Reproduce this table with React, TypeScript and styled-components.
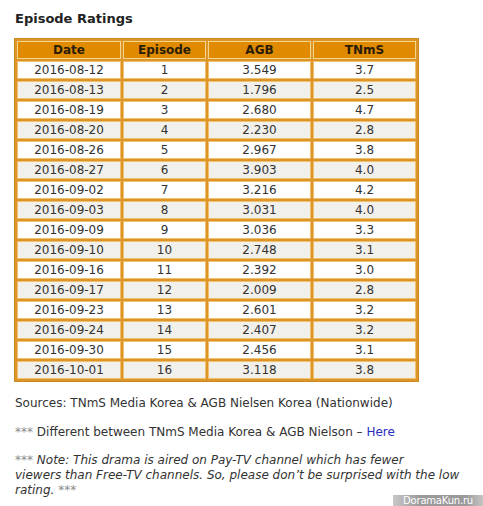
import React from "react";
import styled, { createGlobalStyle } from "styled-components";

const GlobalStyle = createGlobalStyle`
  html, body {
    margin: 0;
    padding: 0;
    background: #ffffff;
  }
  body {
    font-family: "DejaVu Sans", Verdana, sans-serif;
    color: #333333;
  }
`;

const Page = styled.div`
  position: relative;
  width: 483px;
  height: 506px;
  overflow: hidden;
  box-sizing: border-box;
  padding: 11px 12px 0 15px;
`;

const Title = styled.h3`
  margin: 0 0 11px;
  font-size: 13px;
  line-height: 16px;
  font-weight: bold;
  color: #222222;
`;

const Table = styled.table`
  margin-left: -1px;
  border: 1px solid #c98a24;
  border-collapse: separate;
  border-spacing: 2px;
  background: #dc9526;
  font-size: 12px;
  color: #333333;
`;

const HeadCell = styled.th<{ $w: number }>`
  width: ${(p) => p.$w}px;
  height: 16px;
  padding: 0;
  box-sizing: content-box;
  border: 1px solid #f4d58e;
  background: #e08a00;
  color: #2a1c05;
  font-weight: bold;
  line-height: 16px;
  text-align: center;
`;

const Cell = styled.td<{ $alt: boolean }>`
  height: 16px;
  padding: 0;
  border: 1px solid #eec070;
  background: ${(p) => (p.$alt ? "#f2f0ea" : "#ffffff")};
  line-height: 16px;
  text-align: center;
`;

const Para = styled.p<{ $top: number }>`
  margin: ${(p) => p.$top}px 0 0;
  width: 456px;
  font-size: 12px;
  line-height: 15px;
  color: #333333;
`;

const Note = styled(Para)`
  font-style: italic;
`;

const Stars = styled.span`
  color: #8a8a8a;
`;

const Link = styled.a`
  color: #2b2bc4;
  text-decoration: none;
`;

const Watermark = styled.div`
  position: absolute;
  right: 0;
  bottom: 0;
  width: 90px;
  height: 11px;
  background: linear-gradient(to right, #c8c8c8, #9a9a9a 30%, #9a9a9a 80%, #c4c4c4);
  color: #ffffff;
  font-family: "DejaVu Sans", sans-serif;
  font-size: 10px;
  line-height: 11px;
  text-align: center;
  letter-spacing: -0.2px;
`;

const rows: [string, number, string, string][] = [
  ["2016-08-12", 1, "3.549", "3.7"],
  ["2016-08-13", 2, "1.796", "2.5"],
  ["2016-08-19", 3, "2.680", "4.7"],
  ["2016-08-20", 4, "2.230", "2.8"],
  ["2016-08-26", 5, "2.967", "3.8"],
  ["2016-08-27", 6, "3.903", "4.0"],
  ["2016-09-02", 7, "3.216", "4.2"],
  ["2016-09-03", 8, "3.031", "4.0"],
  ["2016-09-09", 9, "3.036", "3.3"],
  ["2016-09-10", 10, "2.748", "3.1"],
  ["2016-09-16", 11, "2.392", "3.0"],
  ["2016-09-17", 12, "2.009", "2.8"],
  ["2016-09-23", 13, "2.601", "3.2"],
  ["2016-09-24", 14, "2.407", "3.2"],
  ["2016-09-30", 15, "2.456", "3.1"],
  ["2016-10-01", 16, "3.118", "3.8"],
];

function App() {
  return (
    <Page>
      <GlobalStyle />
      <Title>Episode Ratings</Title>
      <Table>
        <thead>
          <tr>
            <HeadCell $w={102}>Date</HeadCell>
            <HeadCell $w={81}>Episode</HeadCell>
            <HeadCell $w={101}>AGB</HeadCell>
            <HeadCell $w={101}>TNmS</HeadCell>
          </tr>
        </thead>
        <tbody>
          {rows.map(([date, ep, agb, tnms], i) => (
            <tr key={date}>
              <Cell $alt={i % 2 === 1}>{date}</Cell>
              <Cell $alt={i % 2 === 1}>{ep}</Cell>
              <Cell $alt={i % 2 === 1}>{agb}</Cell>
              <Cell $alt={i % 2 === 1}>{tnms}</Cell>
            </tr>
          ))}
        </tbody>
      </Table>
      <Para $top={14}>Sources: TNmS Media Korea &amp; AGB Nielsen Korea (Nationwide)</Para>
      <Para $top={14}>
        <Stars>***</Stars> Different between TNmS Media Korea &amp; AGB Nielson –{" "}
        <Link href="#">Here</Link>
      </Para>
      <Note $top={13}>
        <Stars>***</Stars> Note: This drama is aired on Pay-TV channel which has fewer
        <br />
        viewers than Free-TV channels. So, please don’t be surprised with the low
        <br />
        rating. <Stars>***</Stars>
      </Note>
      <Watermark>DoramaKun.ru</Watermark>
    </Page>
  );
}

export default App;
